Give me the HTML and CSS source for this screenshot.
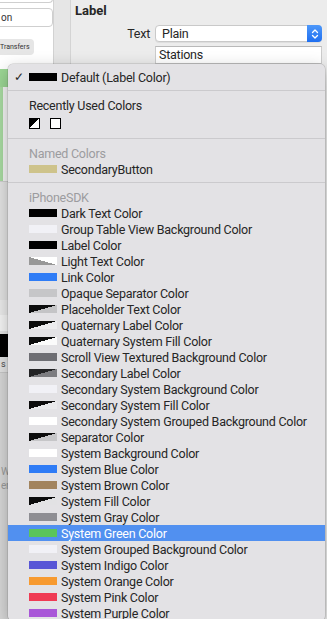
FILE: index.html
```html
<html>
<head>
<link rel="stylesheet" href="styles.css">
</head>
<body>
<div class="window">
  <div class="outline">
    <div class="field field-cut"></div>
    <div class="field">on</div>
    <div class="chip">Transfers</div>
    <div class="cell-green"></div>
    <div class="cell-strip"></div>
    <div class="cell-grey">
      <div class="cell-light"></div>
      <div class="cell-white"></div>
      <div class="cell-black"></div>
      <div class="cell-note">s</div>
    </div>
    <div class="cell-dark">
      <div class="cell-note faint">W</div>
      <div class="cell-note faint">en</div>
    </div>
  </div>
  <div class="gutter"></div>
  <div class="inspector">
    <div class="section-title">Label</div>
    <div class="prop-row">
      <span class="prop-label">Text</span>
      <div class="popup">
        <span>Plain</span>
        <span class="stepper">
          <svg width="8" height="12" viewBox="0 0 8 12"><path d="M1.5 4.5 L4 2 L6.5 4.5 M1.5 7.5 L4 10 L6.5 7.5" fill="none" stroke="#fff" stroke-width="1.3" stroke-linecap="round" stroke-linejoin="round"/></svg>
        </span>
      </div>
    </div>
    <div class="prop-row">
      <span class="prop-label"></span>
      <div class="textfield">Stations</div>
    </div>
  </div>

  <div class="menu">
    <div class="item"><span class="check">&#10003;</span><span class="sw c-black"></span>Default (Label Color)</div>
    <div class="sep"></div>
    <div class="item">Recently Used Colors</div>
    <div class="recent">
      <span class="mini mini-split"></span>
      <span class="mini"></span>
    </div>
    <div class="sep"></div>
    <div class="item head">Named Colors</div>
    <div class="item"><span class="sw c-khaki"></span>SecondaryButton</div>
    <div class="sep"></div>
    <div class="item head">iPhoneSDK</div>
    <div class="item"><span class="sw c-black"></span>Dark Text Color</div>
    <div class="item"><span class="sw c-group"></span>Group Table View Background Color</div>
    <div class="item"><span class="sw c-black"></span>Label Color</div>
    <div class="item"><span class="sw c-lighttext"></span>Light Text Color</div>
    <div class="item"><span class="sw c-blue"></span>Link Color</div>
    <div class="item"><span class="sw c-opaquesep"></span>Opaque Separator Color</div>
    <div class="item"><span class="sw c-placeholder"></span>Placeholder Text Color</div>
    <div class="item"><span class="sw c-quatlabel"></span>Quaternary Label Color</div>
    <div class="item"><span class="sw c-quatfill"></span>Quaternary System Fill Color</div>
    <div class="item"><span class="sw c-scroll"></span>Scroll View Textured Background Color</div>
    <div class="item"><span class="sw c-seclabel"></span>Secondary Label Color</div>
    <div class="item"><span class="sw c-group"></span>Secondary System Background Color</div>
    <div class="item"><span class="sw c-secfill"></span>Secondary System Fill Color</div>
    <div class="item"><span class="sw c-white"></span>Secondary System Grouped Background Color</div>
    <div class="item"><span class="sw c-separator"></span>Separator Color</div>
    <div class="item"><span class="sw c-white"></span>System Background Color</div>
    <div class="item"><span class="sw c-blue"></span>System Blue Color</div>
    <div class="item"><span class="sw c-brown"></span>System Brown Color</div>
    <div class="item"><span class="sw c-fill"></span>System Fill Color</div>
    <div class="item"><span class="sw c-gray"></span>System Gray Color</div>
    <div class="item selected"><span class="sw c-green"></span>System Green Color</div>
    <div class="item"><span class="sw c-group"></span>System Grouped Background Color</div>
    <div class="item"><span class="sw c-indigo"></span>System Indigo Color</div>
    <div class="item"><span class="sw c-orange"></span>System Orange Color</div>
    <div class="item"><span class="sw c-pink"></span>System Pink Color</div>
    <div class="item"><span class="sw c-purple"></span>System Purple Color</div>
  </div>
</div>
</body>
</html>
```

FILE: styles.css
```css
:root {
  --menuText: #262626;
  --menuHead: #9c9c9f;
  --menuBg: #e3e2e5;
  --select: #5190f0;
}

html, body {
  margin: 0;
  padding: 0;
  overflow: hidden;
}

body {
  font-family: Roboto, "Liberation Sans", sans-serif;
  font-size: 12.5px;
  letter-spacing: -0.25px;
  color: #262626;
}

.window {
  position: relative;
  display: flex;
  width: 327px;
  height: 619px;
  overflow: hidden;
  background-color: #ececec;
}

/* left outline panel, mostly hidden by the menu */
.outline {
  width: 53px;
  flex: none;
  background-color: #fff;
  border-right: 1px solid #d2d2d2;
  overflow: hidden;
}

.field {
  height: 17px;
  margin-left: -10px;
  width: 51px;
  padding-left: 10px;
  border: 1px solid #cfcfcf;
  border-radius: 4px;
  background-color: #fff;
  font-size: 10px;
  line-height: 17px;
  letter-spacing: 0;
  color: #333;
}

.field-cut {
  height: 3px;
  margin-top: -1px;
  margin-bottom: 5px;
  border-top: none;
  border-radius: 0 0 4px 4px;
}

.chip {
  width: fit-content;
  margin-top: 12px;
  margin-left: -4px;
  height: 16px;
  padding: 0 4px;
  border-radius: 4px;
  background-color: #e6e6e6;
  font-size: 7px;
  letter-spacing: 0;
  line-height: 16px;
  color: #333;
  white-space: nowrap;
}

.cell-green {
  margin-top: 14px;
  height: 18px;
  background-color: #9bd694;
}

.cell-strip {
  height: 94px;
  border-left: 3px solid #a9dba2;
  background-color: #f4f4f4;
}

.cell-grey {
  height: 190px;
  background-color: #e4e4e4;
  border-top: 1px solid #d0d0d0;
  display: flex;
  flex-direction: column;
}

.cell-light {
  margin-top: 118px;
  height: 15px;
  background-color: #ececec;
}

.cell-white {
  height: 16px;
  background-color: #f6f6f6;
}

.cell-black {
  margin-top: 3px;
  height: 23px;
  background-color: #000;
}

.cell-note {
  font-size: 9px;
  padding-left: 1px;
  color: #444;
  line-height: 14px;
}

.cell-note.faint {
  color: #9a9a9a;
  font-size: 10px;
}

.cell-dark {
  height: 230px;
  background-color: #d8d8d8;
  border-top: 1px solid #c8c8c8;
  padding-top: 92px;
}

.gutter {
  width: 16px;
  flex: none;
  background-color: #e6e6e6;
  border-right: 1px solid #d4d4d4;
}

.inspector {
  flex: 1;
  padding: 3px 5px 0 4px;
}

.section-title {
  font-weight: 700;
  font-size: 13px;
  letter-spacing: 0;
  height: 17px;
  line-height: 15px;
}

.prop-row {
  display: flex;
  align-items: center;
  margin-top: 5px;
}

.prop-label {
  width: 75px;
  flex: none;
  text-align: right;
  padding-right: 5px;
}

.popup {
  flex: 1;
  display: flex;
  align-items: center;
  justify-content: space-between;
  height: 15px;
  padding-left: 6px;
  background-color: #fff;
  border: 1px solid #c9c9c9;
  border-radius: 4px;
  box-shadow: 0 1px 0 rgba(0,0,0,0.06);
}

.stepper {
  display: flex;
  align-items: center;
  justify-content: center;
  width: 15px;
  height: 17px;
  margin-right: -1px;
  border-radius: 0 4px 4px 0;
  background: linear-gradient(#4d98fa, #1f6ff0);
}

.textfield {
  flex: 1;
  height: 16px;
  line-height: 16px;
  padding-left: 3px;
  margin-top: -1px;
  background-color: #fff;
  border: 1px solid #cbcbcb;
  border-top-color: #b9b9b9;
}

/* the color popup menu */
.menu {
  position: absolute;
  left: 8px;
  top: 64px;
  width: 317px;
  padding-top: 5px;
  background-color: var(--menuBg);
  border-radius: 5px;
  box-shadow: 0 0 0 0.5px rgba(0,0,0,0.18), 0 6px 18px rgba(0,0,0,0.28);
  color: var(--menuText);
}

.item {
  position: relative;
  display: flex;
  align-items: center;
  height: 16px;
  padding-left: 21px;
  white-space: nowrap;
}

.item.head {
  color: var(--menuHead);
}

.item.selected {
  background-color: var(--select);
  color: #fff;
}

.check {
  position: absolute;
  left: 6px;
  top: 0;
  font-size: 12px;
  line-height: 16px;
}

.sw {
  width: 28px;
  height: 8px;
  margin-right: 4px;
  flex: none;
}

.sep {
  height: 1px;
  margin: 5px 0 6px;
  background-color: #cbcacd;
}

.recent {
  display: flex;
  gap: 10px;
  padding: 5px 0 4px 21px;
}

.mini {
  width: 9px;
  height: 9px;
  border: 1px solid #000;
  background-color: #fff;
}

.mini-split {
  background: linear-gradient(to bottom right, #000 50%, #fff 50%);
}

.c-black { background-color: #000; }
.c-khaki { background-color: #cec38b; }
.c-white { background-color: #fff; }
.c-group { background-color: #f1f1f6; }
.c-blue { background-color: #2f7cf6; }
.c-opaquesep { background-color: #c6c6c8; }
.c-scroll { background-color: #6e6e73; }
.c-brown { background-color: #a2845e; }
.c-gray { background-color: #8e8e93; }
.c-green { background-color: #5ac55c; }
.c-indigo { background-color: #5856d6; }
.c-orange { background-color: #f79a30; }
.c-pink { background-color: #ef3b54; }
.c-purple { background-color: #a956d8; }

.c-lighttext { background: linear-gradient(to top right, #989898 50%, #fff 50%); }
.c-placeholder { background: linear-gradient(to bottom right, #0c0c0c 50%, #c4c4c6 50%); }
.c-quatlabel { background: linear-gradient(to bottom right, #0c0c0c 50%, #ececee 50%); }
.c-quatfill { background: linear-gradient(to bottom right, #0c0c0c 50%, #fbfbfb 50%); }
.c-seclabel { background: linear-gradient(to bottom right, #222224 50%, #7c7c80 50%); }
.c-secfill { background: linear-gradient(to bottom right, #0c0c0c 50%, #e9e9eb 50%); }
.c-separator { background: linear-gradient(to bottom right, #0c0c0c 50%, #c6c6c8 50%); }
.c-fill { background: linear-gradient(to bottom right, #0c0c0c 50%, #e2e2e4 50%); }
```
